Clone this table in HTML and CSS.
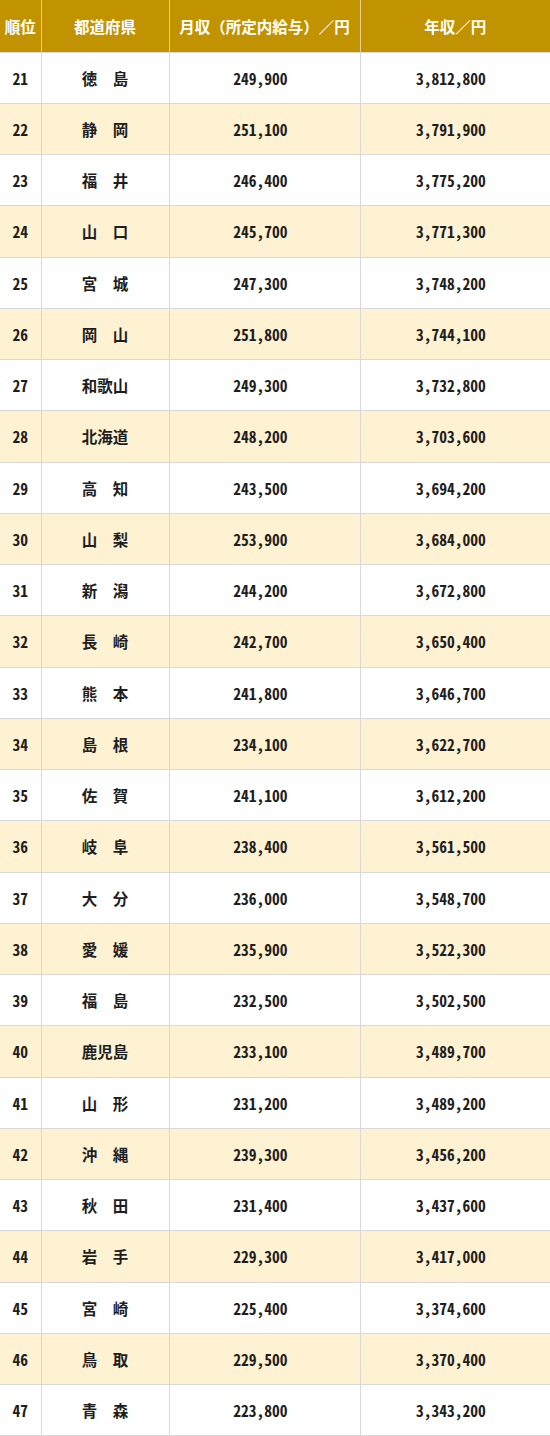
FILE: index.html
```html
<!DOCTYPE html>
<html lang="ja">
<head>
<meta charset="utf-8">
<title>都道府県別 年収ランキング</title>
<link rel="stylesheet" href="styles.css">
</head>
<body>
<table class="rank">
<colgroup><col class="c1"><col class="c2"><col class="c3"><col class="c4"></colgroup>
<thead>
<tr><th>順位</th><th>都道府県</th><th>月収（所定内給与）／円</th><th>年収／円</th></tr>
</thead>
<tbody>
<tr><td>21</td><td>徳　島</td><td>249,900</td><td>3,812,800</td></tr>
<tr><td>22</td><td>静　岡</td><td>251,100</td><td>3,791,900</td></tr>
<tr><td>23</td><td>福　井</td><td>246,400</td><td>3,775,200</td></tr>
<tr><td>24</td><td>山　口</td><td>245,700</td><td>3,771,300</td></tr>
<tr><td>25</td><td>宮　城</td><td>247,300</td><td>3,748,200</td></tr>
<tr><td>26</td><td>岡　山</td><td>251,800</td><td>3,744,100</td></tr>
<tr><td>27</td><td>和歌山</td><td>249,300</td><td>3,732,800</td></tr>
<tr><td>28</td><td>北海道</td><td>248,200</td><td>3,703,600</td></tr>
<tr><td>29</td><td>高　知</td><td>243,500</td><td>3,694,200</td></tr>
<tr><td>30</td><td>山　梨</td><td>253,900</td><td>3,684,000</td></tr>
<tr><td>31</td><td>新　潟</td><td>244,200</td><td>3,672,800</td></tr>
<tr><td>32</td><td>長　崎</td><td>242,700</td><td>3,650,400</td></tr>
<tr><td>33</td><td>熊　本</td><td>241,800</td><td>3,646,700</td></tr>
<tr><td>34</td><td>島　根</td><td>234,100</td><td>3,622,700</td></tr>
<tr><td>35</td><td>佐　賀</td><td>241,100</td><td>3,612,200</td></tr>
<tr><td>36</td><td>岐　阜</td><td>238,400</td><td>3,561,500</td></tr>
<tr><td>37</td><td>大　分</td><td>236,000</td><td>3,548,700</td></tr>
<tr><td>38</td><td>愛　媛</td><td>235,900</td><td>3,522,300</td></tr>
<tr><td>39</td><td>福　島</td><td>232,500</td><td>3,502,500</td></tr>
<tr><td>40</td><td>鹿児島</td><td>233,100</td><td>3,489,700</td></tr>
<tr><td>41</td><td>山　形</td><td>231,200</td><td>3,489,200</td></tr>
<tr><td>42</td><td>沖　縄</td><td>239,300</td><td>3,456,200</td></tr>
<tr><td>43</td><td>秋　田</td><td>231,400</td><td>3,437,600</td></tr>
<tr><td>44</td><td>岩　手</td><td>229,300</td><td>3,417,000</td></tr>
<tr><td>45</td><td>宮　崎</td><td>225,400</td><td>3,374,600</td></tr>
<tr><td>46</td><td>鳥　取</td><td>229,500</td><td>3,370,400</td></tr>
<tr><td>47</td><td>青　森</td><td>223,800</td><td>3,343,200</td></tr>
</tbody>
</table>
</body>
</html>
```
FILE: styles.css
```css
html, body {
  margin: 0;
  padding: 0;
  background: #ffffff;
}
.rank {
  width: 550px;
  table-layout: fixed;
  border-collapse: collapse;
  font-family: "Noto Sans CJK JP", "Noto Sans", sans-serif;
  font-size: 15.5px;
  font-weight: 700;
  color: #1e1e1e;
}
.c1 { width: 41px; }
.c2 { width: 128px; }
.c3 { width: 191px; }
.c4 { width: 190px; }
.rank th {
  height: 52px;
  padding: 0;
  background: #c29300;
  color: #ffffff;
  font-weight: 700;
  text-align: center;
  border-left: 1px solid #e6cf88;
  border-bottom: 1px solid #d8d8d8;
  box-sizing: border-box;
}
.rank th:first-child { border-left: none; }
.rank td {
  height: 51.26px;
  padding: 0;
  text-align: center;
  border: 1px solid #d8d8d8;
  box-sizing: border-box;
  font-feature-settings: "hwid" 1;
}
.rank td:nth-child(2) {
  font-feature-settings: normal;
}
.rank td:nth-child(3),
.rank td:nth-child(4) {
  padding-right: 8px;
}
.rank td:first-child { border-left: none; }
.rank tbody tr:nth-child(even) td {
  background: #fff2d3;
}
```
